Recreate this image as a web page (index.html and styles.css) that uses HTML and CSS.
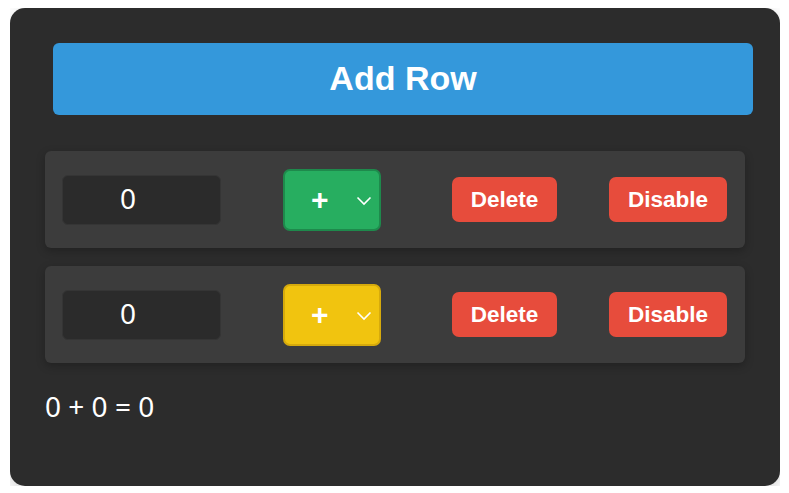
FILE: index.html
```html
<!DOCTYPE html>
<html>
<head>
<meta charset="utf-8">
<link rel="stylesheet" href="styles.css">
</head>
<body>
<div class="card">
  <button class="add-btn">Add Row</button>
  <div class="row">
    <div class="num-input">0</div>
    <div class="op-select op-green">
      <span class="op-sign">+</span>
      <svg class="chev" width="16" height="10" viewBox="0 0 16 10"><polyline points="1.5,1.5 8,8 14.5,1.5" fill="none" stroke="#fff" stroke-width="1.6"/></svg>
    </div>
    <button class="btn-red btn-delete">Delete</button>
    <button class="btn-red btn-disable">Disable</button>
  </div>
  <div class="row">
    <div class="num-input">0</div>
    <div class="op-select op-yellow">
      <span class="op-sign">+</span>
      <svg class="chev" width="16" height="10" viewBox="0 0 16 10"><polyline points="1.5,1.5 8,8 14.5,1.5" fill="none" stroke="#fff" stroke-width="1.6"/></svg>
    </div>
    <button class="btn-red btn-delete">Delete</button>
    <button class="btn-red btn-disable">Disable</button>
  </div>
  <div class="result">0 + 0 = 0</div>
</div>
</body>
</html>
```
FILE: styles.css
```css
html, body {
  background: #ffffff;
}
body {
  margin: 8px 9px 0 10px;
}
.card {
  box-sizing: border-box;
  height: 478px;
  background: #2c2c2c;
  border-radius: 15px;
  padding: 35px;
  box-shadow: 0 4px 14px rgba(0, 0, 0, 0.18);
}
.add-btn {
  display: block;
  width: 100%;
  height: 72px;
  margin: 0 0 0 8px;
  border: none;
  border-radius: 6px;
  background: #3498db;
  color: #fff;
  font-family: "Liberation Sans", Arial, sans-serif;
  font-weight: bold;
  font-size: 34px;
  padding: 0 0 2px 0;
}
.row {
  display: flex;
  align-items: center;
  height: 97px;
  box-sizing: border-box;
  padding: 0 18px 0 17px;
  background: #3c3c3c;
  border-radius: 6px;
  box-shadow: 0 3px 8px rgba(0, 0, 0, 0.25);
  margin-top: 18px;
}
.add-btn + .row {
  margin-top: 36px;
}
.num-input {
  box-sizing: border-box;
  width: 159px;
  height: 50px;
  background: #2b2b2b;
  border: 1px solid #353535;
  border-radius: 6px;
  color: #fff;
  font-family: "Noto Sans", "Open Sans", sans-serif;
  font-size: 28px;
  line-height: 44px;
  text-align: center;
  padding-right: 27px;
}
.op-select {
  box-sizing: border-box;
  width: 98px;
  height: 62px;
  margin-left: 62px;
  border-radius: 7px;
  border: 2px solid;
  display: flex;
  align-items: center;
  padding-left: 26px;
  position: relative;
}
.op-green {
  background: #27ae60;
  border-color: #1e8a4c;
}
.op-yellow {
  background: #f1c40f;
  border-color: #d6aa0c;
}
.op-sign {
  color: #fff;
  font-family: "Liberation Sans", Arial, sans-serif;
  font-weight: bold;
  font-size: 30px;
  line-height: 1;
}
.chev {
  position: absolute;
  left: 71px;
  top: 25px;
}
.btn-red {
  box-sizing: border-box;
  height: 45px;
  border: none;
  border-radius: 7px;
  background: #e74c3c;
  color: #fff;
  font-family: "Liberation Sans", Arial, sans-serif;
  font-weight: bold;
  font-size: 22.5px;
  padding: 0;
}
.btn-delete {
  width: 105px;
  margin-left: 71px;
}
.btn-disable {
  width: 118px;
  margin-left: 52px;
}
.result {
  margin-top: 23px;
  color: #fff;
  font-family: "Noto Sans", "Open Sans", sans-serif;
  font-size: 28px;
  line-height: 40px;
}
```
